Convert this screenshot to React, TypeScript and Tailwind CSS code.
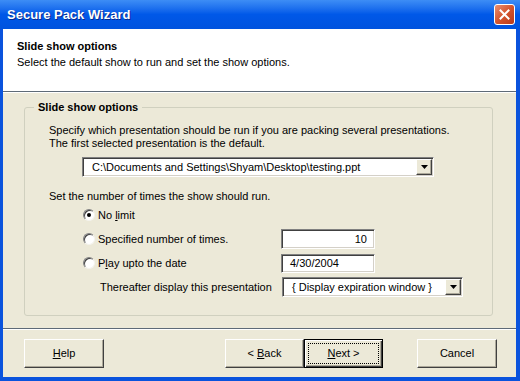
import React from 'react';

const sunken =
  'border border-t-[#808080] border-l-[#808080] border-b-white border-r-white shadow-[inset_1px_1px_0_#404040,inset_-1px_-1px_0_#D4D0C8]';

function Arrow() {
  return (
    <div className="w-[16px] h-full flex items-center justify-center bg-[#ECE9D8] border border-t-white border-l-white border-b-[#404040] border-r-[#404040] shadow-[inset_-1px_-1px_0_#ACA899]">
      <svg width="7" height="4" viewBox="0 0 7 4">
        <path d="M0 0h7L3.5 4z" fill="#000" />
      </svg>
    </div>
  );
}

function Radio({ checked }: { checked?: boolean }) {
  return (
    <div className="w-[12px] h-[12px] rounded-full bg-white border border-t-[#808080] border-l-[#808080] border-b-[#F4F3EE] border-r-[#F4F3EE] shadow-[inset_1px_1px_0_#404040] flex items-center justify-center">
      {checked && <div className="w-[4px] h-[4px] rounded-full bg-black" />}
    </div>
  );
}

function Separator() {
  return <div className="border-t border-t-[#5E6A77] border-b border-b-white" />;
}

export default function App() {
  return (
    <div className="w-[520px] h-[381px] flex flex-col bg-[#0A53DD] font-['Liberation_Sans',Arial,sans-serif] text-[11px] leading-[13px] text-black">
      {/* Title bar */}
      <div className="h-[29px] flex items-center justify-between pl-[7px] pr-[5px] bg-gradient-to-b from-[#3D8DF5] via-[#0058E8] to-[#0053DE]">
        <span className="text-white font-bold text-[13px] [text-shadow:1px_1px_0_#0A2A8E]">Secure Pack Wizard</span>
        <div className="w-[21px] h-[21px] rounded-[3px] border border-white bg-gradient-to-br from-[#E98F71] via-[#D4542D] to-[#B8391A] flex items-center justify-center">
          <svg width="11" height="11" viewBox="0 0 11 11">
            <path d="M1.5 1.5l8 8M9.5 1.5l-8 8" stroke="#fff" strokeWidth="2" strokeLinecap="square" />
          </svg>
        </div>
      </div>

      <div className="flex-1 ml-[3px] mr-[4px] mb-[4px] bg-[#ECE9D8] flex flex-col">
        {/* Header */}
        <div className="h-[62px] bg-white pl-[14px] pt-[11px]">
          <div className="font-bold">Slide show options</div>
          <div className="mt-[3px]">Select the default show to run and set the show options.</div>
        </div>
        <Separator />

        {/* Body */}
        <div className="flex-1 pl-[21px] pt-[8px]">
          <fieldset className="w-[469px] border border-[#D0D0BF] rounded-[3px] pl-[9px] pb-[18px]">
            <legend className="px-[4px] font-bold">Slide show options</legend>
            <div className="pl-[15px] mt-[10px]">
              <p>Specify which presentation should be run if you are packing several presentations.</p>
              <p>The first selected presentation is the default.</p>
            </div>
            <div className={`ml-[48px] mt-[7px] w-[352px] h-[20px] bg-white flex items-center ${sunken} pr-[1px] py-[1px]`}>
              <span className="flex-1 pl-[9px]">C:\Documents and Settings\Shyam\Desktop\testing.ppt</span>
              <Arrow />
            </div>
            <p className="pl-[15px] mt-[13px]">Set the number of times the show should run.</p>

            <div className="mt-[2px] flex flex-col gap-[4px]">
              <div className="h-[20px] flex items-center pl-[49px]">
                <Radio checked />
                <span className="ml-[3px]">No <u>l</u>imit</span>
              </div>
              <div className="h-[20px] flex items-center pl-[49px]">
                <Radio />
                <span className="ml-[3px] w-[183px]">Specified number of times.</span>
                <div className={`w-[94px] h-[20px] bg-white flex items-center justify-end pr-[7px] ${sunken}`}>10</div>
              </div>
              <div className="h-[20px] flex items-center pl-[49px]">
                <Radio />
                <span className="ml-[3px] w-[183px]">P<u>l</u>ay upto the date</span>
                <div className={`w-[94px] h-[19px] bg-white flex items-center pl-[8px] ${sunken}`}>4/30/2004</div>
              </div>
              <div className="h-[20px] flex items-center pl-[66px]">
                <span className="w-[182px]">Thereafter display this presentation</span>
                <div className={`w-[181px] h-[20px] bg-white flex items-center pr-[1px] py-[1px] ${sunken}`}>
                  <span className="flex-1 pl-[9px]">{'{ Display expiration window }'}</span>
                  <Arrow />
                </div>
              </div>
            </div>
          </fieldset>
        </div>
        <Separator />

        {/* Buttons */}
        <div className="h-[47px] pt-[9px] flex items-start">
          <button className="ml-[21px] w-[80px] h-[29px] bg-[#ECE9D8] border border-t-white border-l-white border-b-[#404040] border-r-[#404040] shadow-[inset_-1px_-1px_0_#ACA899]">
            <u>H</u>elp
          </button>
          <button className="ml-[121px] w-[79px] h-[29px] bg-[#ECE9D8] border border-t-white border-l-white border-b-[#404040] border-r-[#404040] shadow-[inset_-1px_-1px_0_#ACA899]">
            &lt; <u>B</u>ack
          </button>
          <button className="w-[79px] h-[29px] bg-[#ECE9D8] border border-black shadow-[inset_1px_1px_0_#fff,inset_-1px_-1px_0_#404040,inset_-2px_-2px_0_#ACA899] p-[3px]">
            <div className="w-full h-full border border-dotted border-black flex items-center justify-center">
              <span><u>N</u>ext &gt;</span>
            </div>
          </button>
          <button className="ml-[34px] w-[80px] h-[29px] bg-[#ECE9D8] border border-t-white border-l-white border-b-[#404040] border-r-[#404040] shadow-[inset_-1px_-1px_0_#ACA899]">
            Cancel
          </button>
        </div>
      </div>
    </div>
  );
}
